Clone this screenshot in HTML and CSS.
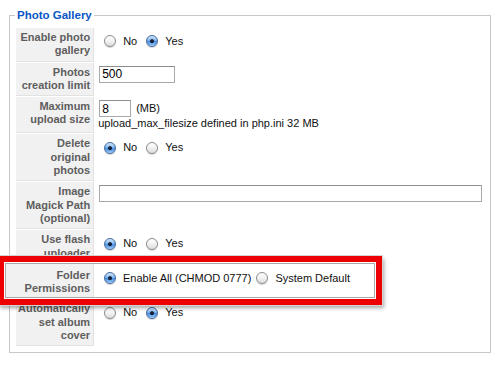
FILE: index.html
```html
<!DOCTYPE html>
<html>
<head>
<meta charset="utf-8">
<link rel="stylesheet" href="styles.css">
</head>
<body>
<fieldset class="panel">
  <legend class="panel-title">Photo Gallery</legend>
  <table class="admintable">
    <tr>
      <td class="key">Enable photo gallery</td>
      <td class="val">
        <div class="choices">
          <label class="opt"><input type="radio" class="rd" name="g1"> No</label>
          <label class="opt"><input type="radio" class="rd" name="g1" checked> Yes</label>
        </div>
      </td>
    </tr>
    <tr>
      <td class="key">Photos creation limit</td>
      <td class="val"><input type="text" class="txt txt-mid" value="500"></td>
    </tr>
    <tr>
      <td class="key">Maximum upload size</td>
      <td class="val">
        <div class="inline-field"><input type="text" class="txt txt-small" value="8"><span class="unit">(MB)</span></div>
        <div class="note">upload_max_filesize defined in php.ini 32 MB</div>
      </td>
    </tr>
    <tr>
      <td class="key">Delete original photos</td>
      <td class="val">
        <div class="choices">
          <label class="opt"><input type="radio" class="rd" name="g2" checked> No</label>
          <label class="opt"><input type="radio" class="rd" name="g2"> Yes</label>
        </div>
      </td>
    </tr>
    <tr>
      <td class="key">Image<br>Magick Path (optional)</td>
      <td class="val"><input type="text" class="txt txt-wide" value=""></td>
    </tr>
    <tr>
      <td class="key">Use flash uploader</td>
      <td class="val">
        <div class="choices">
          <label class="opt"><input type="radio" class="rd" name="g3" checked> No</label>
          <label class="opt"><input type="radio" class="rd" name="g3"> Yes</label>
        </div>
      </td>
    </tr>
    <tr class="row-covered">
      <td class="key">Folder Permissions</td>
      <td class="val">
        <div class="choices">
          <label class="opt"><input type="radio" class="rd" name="g4" checked> Enable All (CHMOD 0777)</label>
          <label class="opt opt-tight"><input type="radio" class="rd" name="g4"> System Default</label>
        </div>
      </td>
    </tr>
    <tr>
      <td class="key">Automatically set album cover</td>
      <td class="val">
        <div class="choices">
          <label class="opt"><input type="radio" class="rd" name="g5"> No</label>
          <label class="opt"><input type="radio" class="rd" name="g5" checked> Yes</label>
        </div>
      </td>
    </tr>
  </table>
</fieldset>

<div class="callout">
  <div class="callout-row">
    <div class="callout-key">Folder Permissions</div>
    <div class="callout-val">
      <div class="choices">
        <label class="opt"><input type="radio" class="rd" name="c4" checked> Enable All (CHMOD 0777)</label>
        <label class="opt opt-tight"><input type="radio" class="rd" name="c4"> System Default</label>
      </div>
    </div>
  </div>
</div>
</body>
</html>
```

FILE: styles.css
```css
html, body {
  background: #fff;
}
body {
  margin: 8px 5px 0 9px;
  font-family: "Liberation Sans", Arial, Helvetica, sans-serif;
  font-size: 11px;
  color: #111;
}

.panel {
  margin: 0;
  padding: 5px 5px 5px 5px;
  border: 1px solid #c8c8c8;
  min-width: 0;
}
.panel-title {
  padding: 0 2px;
  font-size: 11.5px;
  line-height: 14px;
  font-weight: bold;
  color: #0b55c4;
}

.admintable {
  width: 100%;
  border-collapse: separate;
  border-spacing: 1px;
}
.admintable td {
  padding: 3px;
  vertical-align: top;
  line-height: 13.3px;
}
.admintable td.key {
  width: 78px;
  box-sizing: border-box;
  padding: 3px 3px 3px 2px;
  background: #f1f1f1;
  border-right: 1px solid #e2e2e2;
  border-bottom: 1px solid #e2e2e2;
  text-align: right;
  font-weight: bold;
  color: #5e5e5e;
}
.row-covered td > * ,
.row-covered td.key {
  visibility: hidden;
}
.row-covered td.key {
  color: transparent;
}

.choices {
  display: flex;
  align-items: center;
  height: 17px;
  margin-top: 2px;
  white-space: nowrap;
}
.opt {
  display: flex;
  align-items: center;
}
.opt + .opt {
  margin-left: 3px;
}
.opt-tight {
  margin-left: 0 !important;
}
.opt-tight .rd {
  margin-left: 5px;
}

.rd {
  appearance: none;
  -webkit-appearance: none;
  width: 12px;
  height: 12px;
  margin: 0 7px 0 6px;
  border-radius: 50%;
  border: 1px solid #8c8c8c;
  background: linear-gradient(#ffffff 0%, #f2f2f2 50%, #dcdcdc 100%);
  box-shadow: 0 1px 1px rgba(0, 0, 0, 0.18);
  box-sizing: border-box;
}
.rd:checked {
  border-color: #44699f;
  background:
    radial-gradient(circle at 50% 52%, #17233b 0, #17233b 1.6px, rgba(23, 35, 59, 0) 2.4px),
    linear-gradient(#d4e8fb 0%, #8cbdf2 40%, #4d8fe0 55%, #7fb8f3 85%, #b5dafc 100%);
}

.txt {
  box-sizing: border-box;
  height: 17px;
  margin: 0 0 0 1px;
  padding: 0 2px;
  border: 1px solid #a9a9a9;
  border-top-color: #8e8e8e;
  font-family: "Liberation Sans", Arial, sans-serif;
  font-size: 12px;
  color: #000;
  background: #fff;
  display: block;
}
.txt-mid { width: 76px; }
.txt-small { width: 32px; }
.txt-wide { width: 383px; }

.inline-field {
  display: flex;
  align-items: center;
}
.unit {
  margin-left: 5px;
  color: #111;
}
.note {
  color: #111;
}

.callout {
  position: absolute;
  left: -2px;
  top: 256px;
  width: 370px;
  border: 6px solid #ee0000;
  padding: 1px;
  background: #fff;
  box-shadow: 0 0 0 1px #d4d4d4, 2px 3px 4px rgba(0, 0, 0, 0.35);
}
.callout-row {
  display: flex;
  height: 33px;
  border: 1px solid #a8a8a8;
}
.callout-key {
  width: 88px;
  box-sizing: border-box;
  padding: 5px 3px 0 0;
  background: #f1f1f1;
  border-right: 1px solid #e2e2e2;
  text-align: right;
  font-weight: bold;
  color: #5e5e5e;
  line-height: 13.2px;
}
.callout-val {
  flex: 1;
  padding: 3px 0 0 4px;
}
```
